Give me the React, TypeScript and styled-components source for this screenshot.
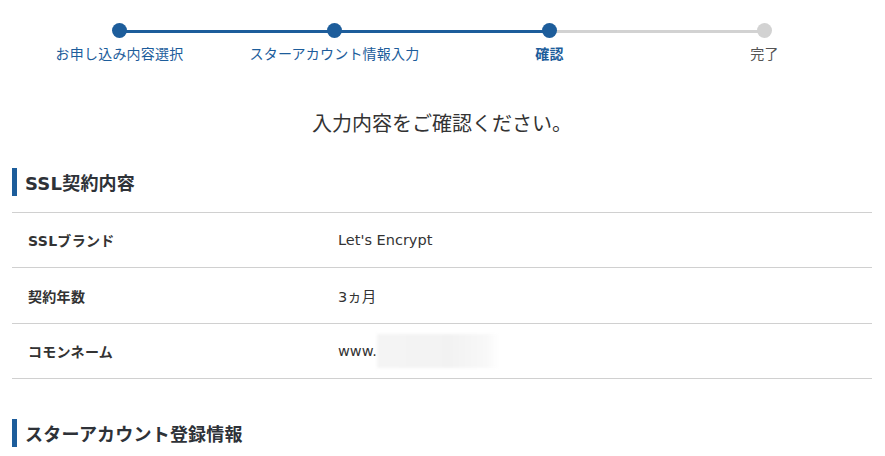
import React from "react";
import styled, { createGlobalStyle } from "styled-components";

const Global = createGlobalStyle`
  html, body { margin: 0; padding: 0; background: #fff; }
  body {
    font-family: "DejaVu Sans", "Noto Sans CJK JP", sans-serif;
    color: #333;
  }
`;

const BLUE = "#1d5d9b";
const GRAY = "#d2d2d2";

const Page = styled.div`
  width: 860px;
  padding: 0 13px 0 12px;
`;

const Stepper = styled.ol`
  list-style: none;
  margin: 0;
  padding: 23px 0 0;
  display: grid;
  grid-template-columns: repeat(4, 1fr);
`;

const Step = styled.li<{ $lineOn: boolean; $last: boolean }>`
  position: relative;
  display: flex;
  flex-direction: column;
  align-items: center;
  &::after {
    content: "";
    display: ${(p) => (p.$last ? "none" : "block")};
    position: absolute;
    top: 6.5px;
    left: 50%;
    width: 100%;
    height: 3px;
    background: ${(p) => (p.$lineOn ? BLUE : GRAY)};
  }
`;

const Dot = styled.span<{ $done: boolean }>`
  position: relative;
  z-index: 1;
  width: 15px;
  height: 15px;
  border-radius: 50%;
  background: ${(p) => (p.$done ? BLUE : GRAY)};
`;

const StepLabel = styled.span<{ $state: "done" | "current" | "todo" }>`
  margin-top: 6px;
  font-size: 14px;
  line-height: 20px;
  letter-spacing: 0.2px;
  color: ${(p) => (p.$state === "todo" ? "#555" : BLUE)};
  font-weight: ${(p) => (p.$state === "current" ? 700 : 400)};
`;

const Lead = styled.p`
  margin: 45px 0 0;
  text-align: center;
  font-size: 20px;
  line-height: 30px;
  color: #333;
`;

const SectionTitle = styled.h2<{ $top: number }>`
  margin: ${(p) => p.$top}px 0 0;
  border-left: 5px solid ${BLUE};
  padding-left: 8px;
  height: 28px;
  display: flex;
  align-items: center;
  font-size: 18px;
  font-weight: 700;
  letter-spacing: 0.2px;
  color: #2e3238;
`;

const Table = styled.dl`
  margin: 16px 0 0;
  border-top: 1px solid #d0d0d0;
`;

const Row = styled.div`
  display: grid;
  grid-template-columns: 326px 1fr;
  align-items: center;
  height: 54.4px;
  border-bottom: 1px solid #d0d0d0;
`;

const Label = styled.dt`
  padding-left: 16px;
  font-size: 14px;
  font-weight: 700;
  letter-spacing: 0.3px;
  color: #333;
`;

const Value = styled.dd`
  margin: 0;
  display: flex;
  align-items: center;
  font-size: 14.5px;
  color: #333;
`;

const Blurred = styled.span`
  display: inline-block;
  width: 122px;
  height: 34px;
  background: linear-gradient(90deg, #f4f4f4 0%, #f2f2f2 60%, #f8f8f8 90%, #fff 100%);
  filter: blur(1.5px);
`;

const steps = [
  { label: "お申し込み内容選択", state: "done" as const },
  { label: "スターアカウント情報入力", state: "done" as const },
  { label: "確認", state: "current" as const },
  { label: "完了", state: "todo" as const },
];

export default function App() {
  return (
    <>
      <Global />
      <Page>
        <Stepper>
          {steps.map((s, i) => {
            const next = steps[i + 1];
            return (
              <Step
                key={s.label}
                $lineOn={!!next && next.state !== "todo"}
                $last={i === steps.length - 1}
              >
                <Dot $done={s.state !== "todo"} />
                <StepLabel $state={s.state}>{s.label}</StepLabel>
              </Step>
            );
          })}
        </Stepper>
        <Lead>入力内容をご確認ください。</Lead>
        <SectionTitle $top={29}>SSL契約内容</SectionTitle>
        <Table>
          <Row>
            <Label>SSLブランド</Label>
            <Value>Let's Encrypt</Value>
          </Row>
          <Row>
            <Label>契約年数</Label>
            <Value>3ヵ月</Value>
          </Row>
          <Row>
            <Label>コモンネーム</Label>
            <Value>
              www.
              <Blurred />
            </Value>
          </Row>
        </Table>
        <SectionTitle $top={40}>スターアカウント登録情報</SectionTitle>
      </Page>
    </>
  );
}
